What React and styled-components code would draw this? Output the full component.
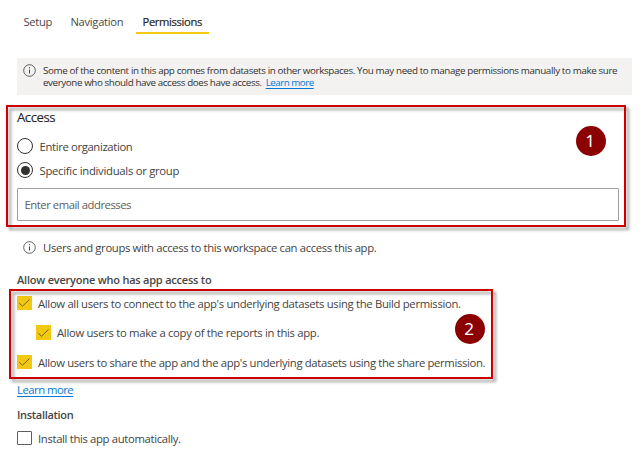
import React from "react";
import styled, { createGlobalStyle } from "styled-components";

const GlobalStyle = createGlobalStyle`
  * { box-sizing: border-box; }
  body { margin: 0; background: #fff; overflow: hidden; }
`;

const Page = styled.main`
  position: relative;
  width: 641px;
  height: 462px;
  padding: 10px 9px 0 17px;
  display: flex;
  flex-direction: column;
  font-family: "Open Sans", "Noto Sans", sans-serif;
  font-size: 11.3px;
  color: #444342;
  background: #fff;
`;

const Label = styled.span`
  white-space: nowrap;
  letter-spacing: ${(p) => p.$track || 0}px;
`;

const Tabs = styled.nav`
  display: flex;
  height: 24px;
  margin-bottom: 24px;
`;

const Tab = styled.div`
  width: ${(p) => p.$width}px;
  padding-left: 6.5px;
  line-height: 24px;
  font-size: 11.2px;
  color: ${(p) => (p.$active ? "#252423" : "#4a4948")};
  -webkit-text-stroke: ${(p) => (p.$active ? "0.2px" : "0")};
  border-bottom: 2px solid ${(p) => (p.$active ? "#f2c811" : "transparent")};
`;

const Banner = styled.section`
  display: flex;
  height: 37px;
  padding: 6px 0 0 6px;
  gap: 7px;
  background: #f3f2f1;
  font-size: 9.8px;
  line-height: 12px;
  color: #323130;
`;

const BannerText = styled.div`
  display: flex;
  flex-direction: column;
  padding-top: 1px;
`;

const BannerLine = styled.div`
  display: flex;
  gap: 4px;
`;

const Link = styled.a`
  color: #0078d4;
  text-decoration: underline;
  text-underline-offset: 1.5px;
  white-space: nowrap;
  letter-spacing: -0.5px;
`;

const AccessTitle = styled.h2`
  margin: 12px 0 7px;
  height: 20px;
  line-height: 20px;
  font-size: 13.2px;
  font-weight: 400;
  color: #252423;
  -webkit-text-stroke: 0.1px;
`;

const Option = styled.label`
  display: flex;
  align-items: center;
  gap: 6.5px;
  height: 24px;
`;

const Radio = styled.span`
  display: grid;
  place-items: center;
  width: 16px;
  height: 16px;
  border: 1px solid #323130;
  border-radius: 50%;
  &::after {
    content: "";
    width: 9px;
    height: 9px;
    border-radius: 50%;
    background: ${(p) => (p.$checked ? "#323130" : "transparent")};
  }
`;

const EmailField = styled.div`
  display: flex;
  align-items: center;
  width: 602px;
  height: 33px;
  margin-top: 6px;
  padding-left: 6.5px;
  border: 1px solid #a19f9d;
  border-radius: 1px;
  color: #605e5c;
`;

const Note = styled.div`
  display: flex;
  align-items: center;
  gap: 7px;
  height: 20px;
  margin-top: 16px;
  padding-left: 6px;
`;

const Heading = styled.h3`
  margin: ${(p) => p.$top}px 0 0;
  height: 16px;
  line-height: 16px;
  font-size: 11px;
  font-weight: 600;
  color: #484644;
`;

const CheckRow = styled.label`
  display: flex;
  align-items: flex-start;
  gap: 6px;
  height: 15px;
  line-height: 16px;
  margin-top: ${(p) => p.$top}px;
  padding-left: ${(p) => (p.$nested ? 19 : 0)}px;
`;

const Box = styled.span`
  display: grid;
  place-items: center;
  width: 15px;
  height: ${(p) => (p.$nested ? 15 : 14)}px;
  border: 1px solid ${(p) => (p.$checked ? "#f2c811" : "#605e5c")};
  border-radius: ${(p) => (p.$checked ? 0 : 1)}px;
  background: ${(p) => (p.$checked ? "#f2c811" : "#fff")};
`;

const LearnRow = styled.div`
  height: 16px;
  margin-top: 12px;
  line-height: 16px;
`;

const Callout = styled.div`
  position: absolute;
  left: ${(p) => p.$x}px;
  top: ${(p) => p.$y}px;
  width: ${(p) => p.$w}px;
  height: ${(p) => p.$h}px;
  border: 2px solid #cc0000;
  filter: drop-shadow(3px 3px 1.5px rgba(0, 0, 0, 0.4));
  pointer-events: none;
`;

const Marker = styled.div`
  position: absolute;
  left: ${(p) => p.$x}px;
  top: ${(p) => p.$y}px;
  width: 30px;
  height: 30px;
  padding-right: 2px;
  border-radius: 50%;
  background: #8b0000;
  color: #fff;
  font: 17px/29px "Noto Sans", sans-serif;
  text-align: center;
`;

const InfoSvg = styled.svg`
  flex: none;
  width: 13px;
  height: 13px;
`;

const InfoIcon = () => (
  <InfoSvg viewBox="0 0 13 13" fill="none" stroke="#484644">
    <circle cx="6.5" cy="6.5" r="5.8" strokeWidth="0.85" />
    <path d="M6.5 5.5v4M6.5 3.2v1.1" strokeWidth="1" />
  </InfoSvg>
);

const Check = ({ label, track, checked, ...row }) => (
  <CheckRow {...row}>
    <Box $checked={checked} $nested={row.$nested}>
      {checked && (
        <svg width="13" height="12" viewBox="0 0 13 12" fill="none" stroke="#75620f">
          <path d="M1.3 6.2 4.5 9.2 11.5 2.5" strokeWidth="1" />
        </svg>
      )}
    </Box>
    <Label $track={track}>{label}</Label>
  </CheckRow>
);

export default function App() {
  return (
    <>
      <GlobalStyle />
      <Page>
        <Tabs>
          <Tab $width={47}><Label $track={-0.3}>Setup</Label></Tab>
          <Tab $width={72}><Label $track={-0.3}>Navigation</Label></Tab>
          <Tab $width={73} $active><Label $track={-0.34}>Permissions</Label></Tab>
        </Tabs>
        <Banner>
          <InfoIcon />
          <BannerText>
            <Label $track={-0.37}>Some of the content in this app comes from datasets in other workspaces. You may need to manage permissions manually to make sure</Label>
            <BannerLine>
              <Label $track={-0.4}>everyone who should have access does have access.</Label>
              <Link>Learn more</Link>
            </BannerLine>
          </BannerText>
        </Banner>
        <AccessTitle><Label $track={-0.5}>Access</Label></AccessTitle>
        <Option><Radio /><Label $track={-0.36}>Entire organization</Label></Option>
        <Option><Radio $checked /><Label $track={-0.28}>Specific individuals or group</Label></Option>
        <EmailField><Label $track={-0.47}>Enter email addresses</Label></EmailField>
        <Note><InfoIcon /><Label $track={-0.36}>Users and groups with access to this workspace can access this app.</Label></Note>
        <Heading $top={15}><Label $track={-0.22}>Allow everyone who has app access to</Label></Heading>
        <Check $top={8} checked track={-0.32} label="Allow all users to connect to the app's underlying datasets using the Build permission." />
        <Check $top={14} $nested checked track={-0.31} label="Allow users to make a copy of the reports in this app." />
        <Check $top={15} checked track={-0.35} label="Allow users to share the app and the app's underlying datasets using the share permission." />
        <LearnRow><Link>Learn more</Link></LearnRow>
        <Heading $top={9}><Label $track={-0.3}>Installation</Label></Heading>
        <Check $top={8} track={-0.34} label="Install this app automatically." />
        <Callout $x={6} $y={105} $w={620} $h={122} />
        <Callout $x={9} $y={289} $w={484} $h={90} />
        <Marker $x={576} $y={126}>1</Marker>
        <Marker $x={455} $y={314}>2</Marker>
      </Page>
    </>
  );
}
